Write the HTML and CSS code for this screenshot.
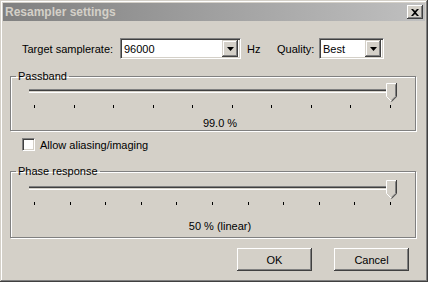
FILE: index.html
```html
<!DOCTYPE html>
<html lang="en">
<head>
  <meta charset="UTF-8" />
  <meta name="viewport" content="width=device-width, initial-scale=1" />
  <title>Resampler settings</title>
  <link rel="stylesheet" href="styles.css">
</head>
<body>
  <div class="window">
    <div class="titlebar">
      <span class="title">Resampler settings</span>
      <button class="close" type="button" aria-label="Close">
        <svg width="8" height="7" viewBox="0 0 8 7"><path d="M0 0h2l2 2 2-2h2L5 3.5 8 7H6L4 5 2 7H0l3-3.5z" fill="#000"/></svg>
      </button>
    </div>
    <div class="content">
      <div class="rate-row">
        <span class="rate-label">Target samplerate:</span>
        <div class="combo rate-combo">
          <span class="combo-text">96000</span>
          <span class="combo-btn"><svg width="7" height="4" viewBox="0 0 7 4"><path d="M0 0h7L3.5 4z" fill="#000"/></svg></span>
        </div>
        <span class="unit">Hz</span>
        <span class="quality-label">Quality:</span>
        <div class="combo quality-combo">
          <span class="combo-text">Best</span>
          <span class="combo-btn"><svg width="7" height="4" viewBox="0 0 7 4"><path d="M0 0h7L3.5 4z" fill="#000"/></svg></span>
        </div>
      </div>

      <fieldset class="group passband">
        <legend>Passband</legend>
        <div class="slider">
          <div class="track"></div>
          <svg class="thumb" width="11" height="19" viewBox="0 0 11 19">
            <path d="M0 0h11v13.5l-5.5 5.5L0 13.5z" fill="#d4d0c8"/>
            <path d="M0.5 13.5V0.5h9.5" stroke="#fff" fill="none"/>
            <path d="M0.5 13.5l5 5" stroke="#fff" fill="none"/>
            <path d="M10.5 0v13.7l-5 5" stroke="#404040" fill="none"/>
            <path d="M9.5 1.5v11.8l-4 4" stroke="#808080" fill="none"/>
          </svg>
        </div>
        <div class="ticks">
          <i></i><i></i><i></i><i></i><i></i><i></i><i></i><i></i><i></i><i></i>
        </div>
        <div class="value">99.0 %</div>
      </fieldset>

      <label class="check">
        <span class="box"></span>
        <span>Allow aliasing/imaging</span>
      </label>

      <fieldset class="group phase">
        <legend>Phase response</legend>
        <div class="slider">
          <div class="track"></div>
          <svg class="thumb" width="11" height="19" viewBox="0 0 11 19">
            <path d="M0 0h11v13.5l-5.5 5.5L0 13.5z" fill="#d4d0c8"/>
            <path d="M0.5 13.5V0.5h9.5" stroke="#fff" fill="none"/>
            <path d="M0.5 13.5l5 5" stroke="#fff" fill="none"/>
            <path d="M10.5 0v13.7l-5 5" stroke="#404040" fill="none"/>
            <path d="M9.5 1.5v11.8l-4 4" stroke="#808080" fill="none"/>
          </svg>
        </div>
        <div class="ticks">
          <i></i><i></i><i></i><i></i><i></i><i></i><i></i><i></i><i></i><i></i><i></i>
        </div>
        <div class="value">50 % (linear)</div>
      </fieldset>

      <div class="buttons">
        <button type="button" class="btn">OK</button>
        <button type="button" class="btn">Cancel</button>
      </div>
    </div>
  </div>
</body>
</html>
```

FILE: styles.css
```css
* {
  box-sizing: border-box;
}
body {
  margin: 0;
  background: #d4d0c8;
  font-family: "Liberation Sans", Arial, sans-serif;
  font-size: 11px;
  color: #000;
}
.window {
  width: 428px;
  height: 282px;
  padding: 3px;
  background: #d4d0c8;
  box-shadow: inset -1px -1px 0 #404040, inset 1px 1px 0 #d4d0c8,
              inset -2px -2px 0 #808080, inset 2px 2px 0 #fff;
}
.titlebar {
  height: 18px;
  display: flex;
  align-items: center;
  justify-content: space-between;
  padding: 0 2px 0 2px;
  background: linear-gradient(to right, #808080, #c0c0c0);
}
.title {
  color: #d4d0c8;
  font-weight: bold;
  font-size: 12px;
}
.close {
  width: 16px;
  height: 14px;
  padding: 0;
  border: none;
  background: #d4d0c8;
  display: flex;
  align-items: center;
  justify-content: center;
  box-shadow: inset -1px -1px 0 #404040, inset 1px 1px 0 #fff,
              inset -2px -2px 0 #808080;
}
.content {
  padding-top: 17px;
}
.rate-row {
  display: flex;
  align-items: center;
  height: 21px;
  padding-left: 19px;
}
.rate-label {
  width: 98px;
}
.unit {
  width: 36px;
  padding-left: 6px;
}
.quality-label {
  width: 42px;
}
.combo {
  height: 21px;
  display: flex;
  align-items: center;
  justify-content: space-between;
  background: #fff;
  border: 1px solid;
  border-color: #808080 #fff #fff #808080;
  box-shadow: inset 1px 1px 0 #404040, inset -1px -1px 0 #d4d0c8;
  padding: 2px 2px 2px 3px;
}
.rate-combo {
  width: 121px;
}
.quality-combo {
  width: 65px;
}
.combo-btn {
  width: 16px;
  height: 17px;
  display: flex;
  align-items: center;
  justify-content: center;
  background: #d4d0c8;
  box-shadow: inset -1px -1px 0 #404040, inset 1px 1px 0 #d4d0c8,
              inset -2px -2px 0 #808080, inset 2px 2px 0 #fff;
}
.group {
  margin: 11px 0 0 7px;
  width: 406px;
  padding: 0;
  border: 1px solid #808080;
  box-shadow: inset 1px 1px 0 #fff, 1px 1px 0 #fff;
}
.group legend {
  margin-left: 5px;
  padding: 0 2px;
  line-height: 13px;
}
.slider {
  position: relative;
  margin-left: 18px;
  width: 368px;
  height: 19px;
  padding-top: 6px;
}
.track {
  height: 4px;
  border-top: 1px solid #808080;
  border-bottom: 1px solid #fff;
  box-shadow: inset 0 1px 0 #404040;
}
.thumb {
  position: absolute;
  right: 0;
  top: 0;
}
.ticks {
  display: flex;
  justify-content: space-between;
  margin: 3px 0 0 23px;
  width: 357px;
}
.ticks i {
  display: block;
  width: 1px;
  height: 3px;
  background: #000;
}
.value {
  margin-top: 9px;
  padding-left: 14px;
  text-align: center;
  line-height: 13px;
}
.check {
  display: flex;
  align-items: center;
  gap: 5px;
  margin: 7px 0 0 19px;
  height: 13px;
}
.box {
  width: 13px;
  height: 13px;
  background: #fff;
  border: 1px solid;
  border-color: #808080 #fff #fff #808080;
  box-shadow: inset 1px 1px 0 #404040, inset -1px -1px 0 #d4d0c8;
}
.phase {
  margin-top: 14px;
}
.phase .slider {
  margin-top: 2px;
}
.phase .ticks {
  margin-top: 3px;
}
.phase .value {
  margin-top: 15px;
  padding-bottom: 4px;
}
.buttons {
  display: flex;
  justify-content: flex-end;
  gap: 22px;
  margin-top: 10px;
  padding-right: 16px;
}
.btn {
  width: 75px;
  height: 23px;
  border: none;
  padding: 0;
  background: #d4d0c8;
  font-family: inherit;
  font-size: 11px;
  color: #000;
  box-shadow: inset -1px -1px 0 #404040, inset 1px 1px 0 #fff,
              inset -2px -2px 0 #808080, inset 2px 2px 0 #d4d0c8;
}
```
